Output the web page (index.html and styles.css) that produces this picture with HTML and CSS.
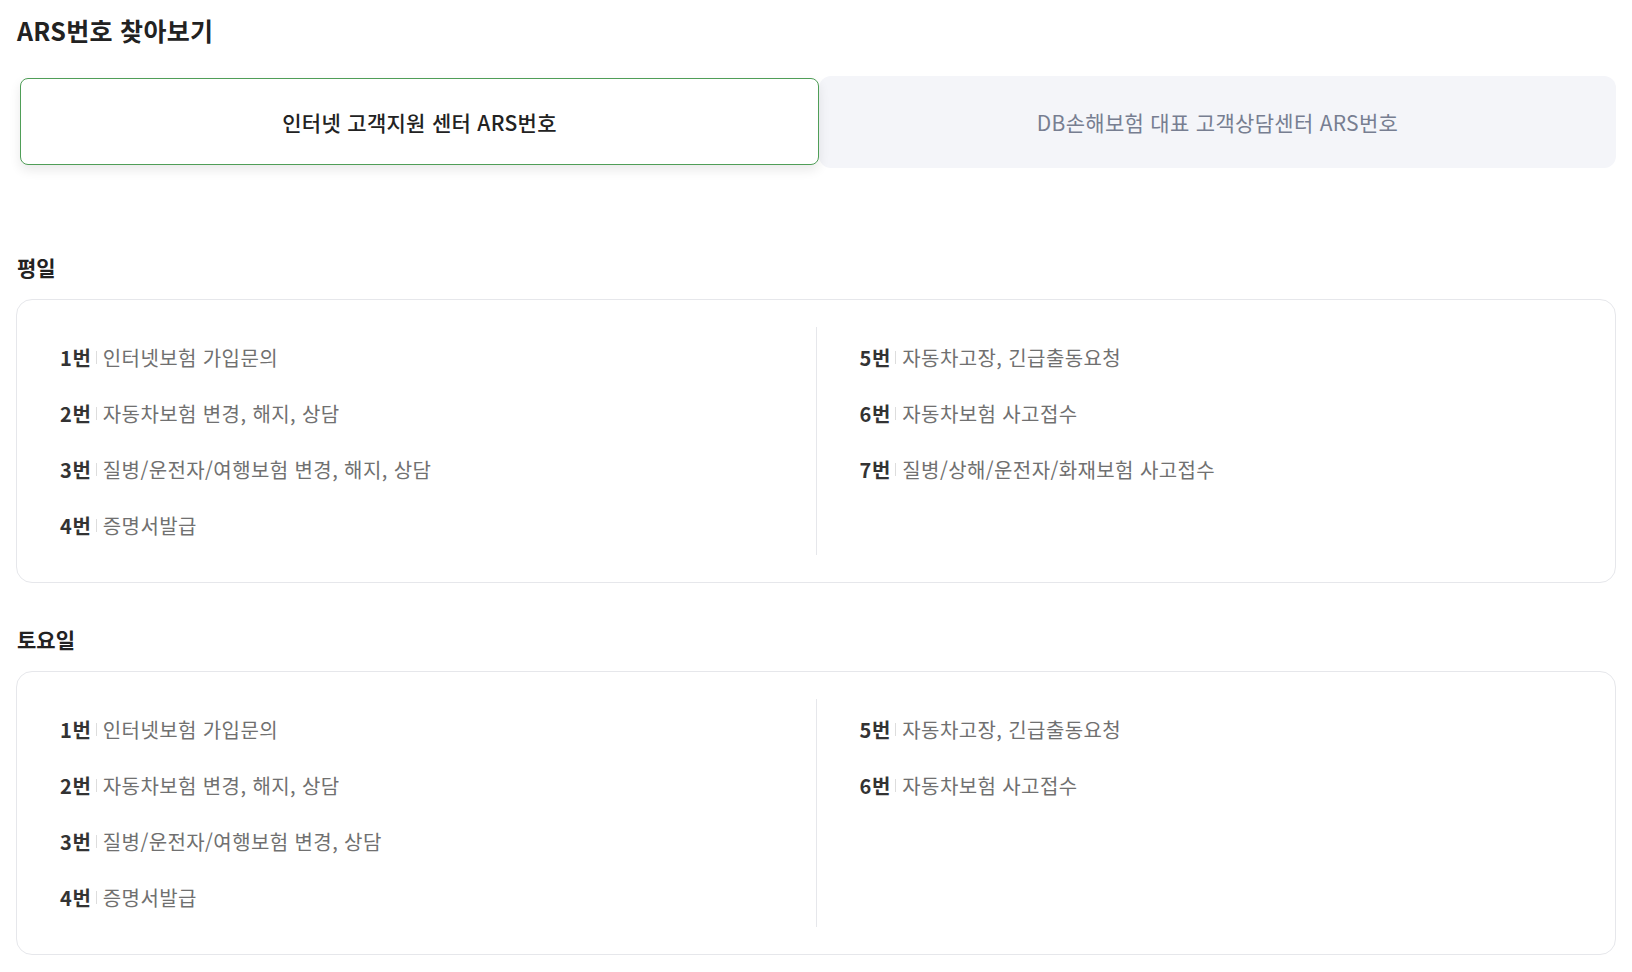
FILE: index.html
```html
<!DOCTYPE html>
<html lang="ko">
<head>
<meta charset="utf-8">
<title>ARS번호 찾아보기</title>
<link rel="stylesheet" href="styles.css">
</head>
<body>
<main class="page">
  <h1 class="title">ARS번호 찾아보기</h1>

  <div class="tabs">
    <button class="tab tab-active" type="button">인터넷 고객지원 센터 ARS번호</button>
    <button class="tab tab-inactive" type="button">DB손해보험 대표 고객상담센터 ARS번호</button>
  </div>

  <h2 class="section-label section-first">평일</h2>
  <div class="card">
    <ul class="col col-left">
      <li class="row"><span class="num">1번</span><span class="sep"></span><span class="desc">인터넷보험 가입문의</span></li>
      <li class="row"><span class="num">2번</span><span class="sep"></span><span class="desc">자동차보험 변경, 해지, 상담</span></li>
      <li class="row"><span class="num">3번</span><span class="sep"></span><span class="desc">질병/운전자/여행보험 변경, 해지, 상담</span></li>
      <li class="row"><span class="num">4번</span><span class="sep"></span><span class="desc">증명서발급</span></li>
    </ul>
    <ul class="col col-right">
      <li class="row"><span class="num">5번</span><span class="sep"></span><span class="desc">자동차고장, 긴급출동요청</span></li>
      <li class="row"><span class="num">6번</span><span class="sep"></span><span class="desc">자동차보험 사고접수</span></li>
      <li class="row"><span class="num">7번</span><span class="sep"></span><span class="desc">질병/상해/운전자/화재보험 사고접수</span></li>
    </ul>
  </div>

  <h2 class="section-label section-next">토요일</h2>
  <div class="card">
    <ul class="col col-left">
      <li class="row"><span class="num">1번</span><span class="sep"></span><span class="desc">인터넷보험 가입문의</span></li>
      <li class="row"><span class="num">2번</span><span class="sep"></span><span class="desc">자동차보험 변경, 해지, 상담</span></li>
      <li class="row"><span class="num">3번</span><span class="sep"></span><span class="desc">질병/운전자/여행보험 변경, 상담</span></li>
      <li class="row"><span class="num">4번</span><span class="sep"></span><span class="desc">증명서발급</span></li>
    </ul>
    <ul class="col col-right">
      <li class="row"><span class="num">5번</span><span class="sep"></span><span class="desc">자동차고장, 긴급출동요청</span></li>
      <li class="row"><span class="num">6번</span><span class="sep"></span><span class="desc">자동차보험 사고접수</span></li>
    </ul>
  </div>
</main>
</body>
</html>
```

FILE: styles.css
```css
* {
  box-sizing: border-box;
}

html, body {
  margin: 0;
  padding: 0;
  background: #ffffff;
}

body {
  font-family: "Noto Sans CJK KR", "Noto Sans", sans-serif;
  color: #222222;
}

.page {
  padding: 0 16px;
}

.title {
  margin: 12px 0 0 1px;
  font-size: 25px;
  line-height: 36px;
  font-weight: 700;
  color: #222222;
  letter-spacing: 0.3px;
}

.tabs {
  display: flex;
  align-items: flex-start;
  margin-top: 28px;
}

.tab {
  flex: 1 1 0;
  font-family: inherit;
  font-size: 21px;
  line-height: 28px;
  letter-spacing: 0.3px;
  padding: 0;
  cursor: pointer;
}

.tab-active {
  margin: 2px 0 0 4px;
  height: 87px;
  background: #ffffff;
  border: 1px solid #4f9e57;
  border-radius: 8px;
  color: #222222;
  font-weight: 500;
  box-shadow: 0 5px 12px rgba(0, 0, 0, 0.09);
  position: relative;
  z-index: 1;
}

.tab-inactive {
  height: 92px;
  background: #f4f5f9;
  border: 0;
  border-radius: 12px;
  color: #777e91;
  font-weight: 400;
}

.section-label {
  margin: 0 0 18px 1px;
  font-size: 21px;
  line-height: 28px;
  font-weight: 700;
  color: #222222;
}

.section-first {
  margin-top: 85px;
}

.section-next {
  margin-top: 42px;
}

.card {
  display: flex;
  border: 1px solid #e6e7eb;
  border-radius: 16px;
  padding: 27px 0;
}

.col {
  flex: 1 1 0;
  list-style: none;
  margin: 0;
  padding: 3px 43px 1px;
}

.col-left {
  border-right: 1px solid #e6e7eb;
}

.row {
  font-size: 20px;
  line-height: 56px;
  white-space: nowrap;
}

.num {
  font-weight: 700;
  color: #333333;
  letter-spacing: 0.8px;
}

.sep {
  display: inline-block;
  width: 1px;
  height: 13px;
  margin: 0 6px 2px 4px;
  background: #dddddd;
}

.desc {
  color: #707070;
  font-weight: 400;
  letter-spacing: 0.4px;
}
```
